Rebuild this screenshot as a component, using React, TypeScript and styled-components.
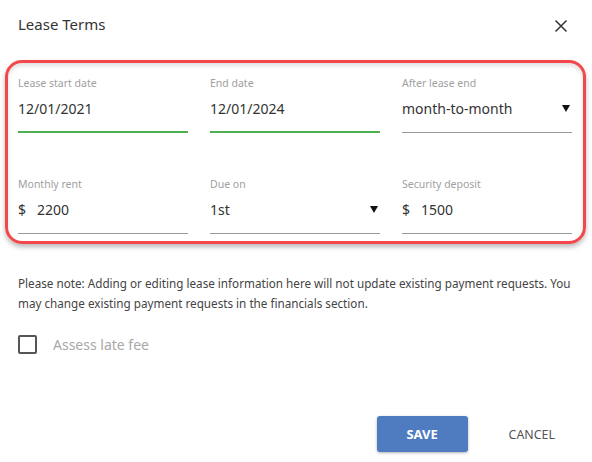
import styled, { createGlobalStyle, css } from "styled-components";

const GlobalStyle = createGlobalStyle`
  html, body {
    margin: 0;
    padding: 0;
    background: #fff;
  }
  body {
    font-family: "Noto Sans", "Open Sans", sans-serif;
    color: #333;
  }
`

const Dialog = styled.div`
  width: 592px;
  height: 462px;
  box-sizing: border-box;
  padding: 13px 0 0 0;
  display: flex;
  flex-direction: column;
`

const Header = styled.div`
  display: flex;
  align-items: center;
  justify-content: space-between;
  padding: 0 24px 0 18px;
  height: 22px;
`

const Title = styled.h2`
  margin: 0;
  font-size: 15px;
  font-weight: 400;
  color: #333;
`

const CloseButton = styled.button`
  border: none;
  background: transparent;
  padding: 0;
  width: 14px;
  height: 14px;
  display: flex;
  margin-top: 4px;
  cursor: pointer;
`

const TermsCard = styled.div`
  margin: 25px 6px 0 5px;
  border: 3px solid #f4474b;
  border-radius: 17px;
  box-shadow: 0 3px 5px rgba(0, 0, 0, 0.28), inset 0 3px 4px rgba(0, 0, 0, 0.12);
  padding: 12px 9px 7px 10px;
  display: grid;
  grid-template-columns: repeat(3, 170px);
  column-gap: 22px;
  row-gap: 43px;
  box-sizing: border-box;
`

const Field = styled.div`
  display: flex;
  flex-direction: column;
`

const Label = styled.label`
  font-size: 10.5px;
  color: #a0a0a0;
  height: 16px;
  line-height: 16px;
`

const ValueRow = styled.div<{ $active?: boolean }>`
  display: flex;
  align-items: center;
  height: 42px;
  box-sizing: border-box;
  font-size: 14px;
  color: #333;
  ${({ $active }) =>
    $active
      ? css`
          border-bottom: 2px solid #4caf50;
          padding-bottom: 6px;
        `
      : css`
          border-bottom: 1px solid #9a9a9a;
          padding-bottom: 7px;
        `}
`

const Prefix = styled.span`
  margin-right: 11px;
`

const Value = styled.span`
  flex: 1;
`

const Caret = styled.span`
  width: 0;
  height: 0;
  border-left: 4px solid transparent;
  border-right: 4px solid transparent;
  border-top: 7px solid #111;
  margin-right: 2px;
`

const Note = styled.p`
  margin: 29px 18px 0 18px;
  font-size: 11.7px;
  line-height: 20px;
  color: #444;
`

const CheckRow = styled.label`
  display: flex;
  align-items: center;
  margin: 22px 0 0 18px;
  gap: 16px;
  font-size: 14px;
  color: #a8a8a8;
`

const Box = styled.span`
  width: 15px;
  height: 15px;
  border: 2px solid #555;
  border-radius: 2px;
`

const Footer = styled.div`
  margin-top: auto;
  display: flex;
  justify-content: flex-end;
  align-items: center;
  gap: 41px;
  padding: 0 37px 10px 0;
`

const Button = styled.button<{ $primary?: boolean }>`
  font-family: inherit;
  font-size: 13px;
  border: none;
  cursor: pointer;
  height: 36px;
  border-radius: 3px;
  ${({ $primary }) =>
    $primary
      ? css`
          width: 91px;
          background: #4f7bc0;
          color: #fff;
          font-weight: 700;
          box-shadow: 0 1px 3px rgba(0, 0, 0, 0.3);
        `
      : css`
          background: transparent;
          color: #555;
          padding: 0;
          font-size: 12.4px;
        `}
`

type FieldProps = {
  label: string
  value: string
  prefix?: string
  select?: boolean
  active?: boolean
}

function TermField({ label, value, prefix, select, active }: FieldProps) {
  return (
    <Field>
      <Label>{label}</Label>
      <ValueRow $active={active}>
        {prefix && <Prefix>{prefix}</Prefix>}
        <Value>{value}</Value>
        {select && <Caret />}
      </ValueRow>
    </Field>
  )
}

function App() {
  return (
    <>
      <GlobalStyle />
      <Dialog>
        <Header>
          <Title>Lease Terms</Title>
          <CloseButton aria-label="Close">
            <svg width="14" height="14" viewBox="0 0 14 14">
              <path d="M1.5 1.5 L12.5 12.5 M12.5 1.5 L1.5 12.5" stroke="#333" strokeWidth="1.5" />
            </svg>
          </CloseButton>
        </Header>
        <TermsCard>
          <TermField label="Lease start date" value="12/01/2021" active />
          <TermField label="End date" value="12/01/2024" active />
          <TermField label="After lease end" value="month-to-month" select />
          <TermField label="Monthly rent" value="2200" prefix="$" />
          <TermField label="Due on" value="1st" select />
          <TermField label="Security deposit" value="1500" prefix="$" />
        </TermsCard>
        <Note>
          Please note: Adding or editing lease information here will not update existing payment requests. You
          may change existing payment requests in the financials section.
        </Note>
        <CheckRow>
          <Box />
          Assess late fee
        </CheckRow>
        <Footer>
          <Button $primary>SAVE</Button>
          <Button>CANCEL</Button>
        </Footer>
      </Dialog>
    </>
  )
}

export default App;
